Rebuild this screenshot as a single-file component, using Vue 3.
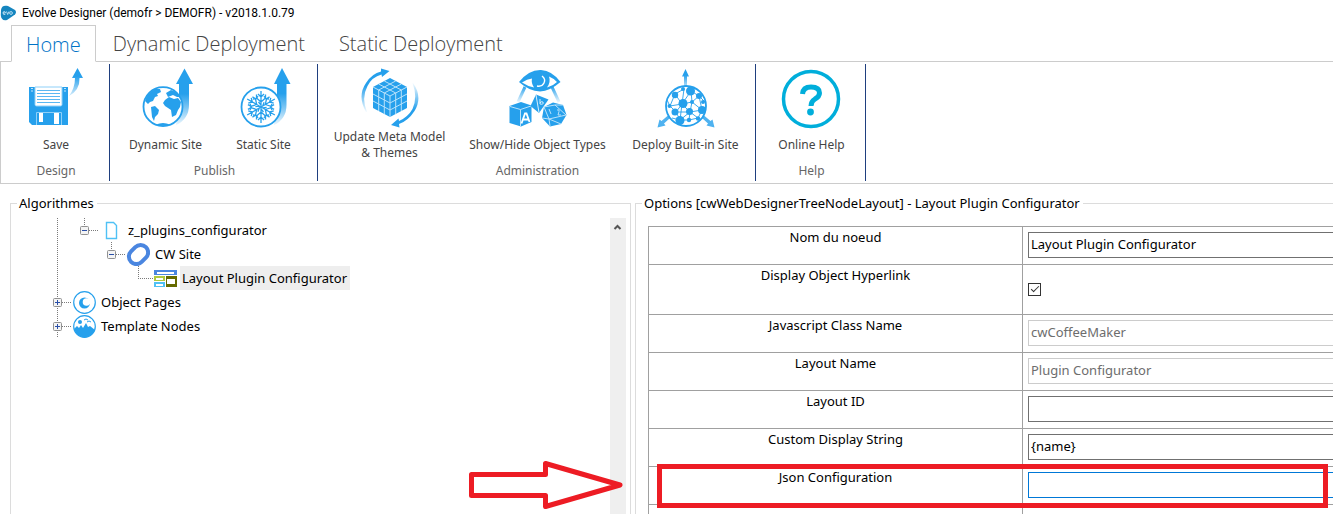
<script setup>
import { reactive } from 'vue'

const tabs = ['Home', 'Dynamic Deployment', 'Static Deployment']

const groups = [
  { name: 'Design', size: 'narrow', items: [{ icon: 'save', label: 'Save', box: '26 64 60 65' }] },
  {
    name: 'Publish',
    size: 'medium',
    items: [
      { icon: 'globe', label: 'Dynamic Site', box: '136 64 60 65' },
      { icon: 'snow', label: 'Static Site', box: '234 64 60 65' },
    ],
  },
  {
    name: 'Administration',
    size: 'wide',
    items: [
      { icon: 'cube', label: 'Update Meta Model & Themes', box: '360 64 60 65' },
      { icon: 'eye', label: 'Show/Hide Object Types', box: '508 64 60 65' },
      { icon: 'network', label: 'Deploy Built-in Site', box: '656 64 60 65' },
    ],
  },
  { name: 'Help', size: 'narrow', items: [{ icon: 'help', label: 'Online Help', box: '782 64 60 65' }] },
]

const tree = [
  { label: 'z_plugins_configurator', icon: 'page', width: 54, lines: ['M12.5 0V24', 'M39.5 0V8', 'M44 12.5H54'], box: 39, open: true },
  { label: 'CW Site', icon: 'ring', width: 81, lines: ['M12.5 0V24', 'M66.5 0V8', 'M71 12.5H81'], box: 66, open: true },
  { label: 'Layout Plugin Configurator', icon: 'layout', width: 108, lines: ['M12.5 0V24', 'M93.5 0V12', 'M93 12.5H108'], selected: true },
  { label: 'Object Pages', icon: 'moon', width: 27, lines: ['M12.5 0V24', 'M17 12.5H27'], box: 12 },
  { label: 'Template Nodes', icon: 'scene', width: 27, lines: ['M12.5 0V24', 'M17 12.5H27'], box: 12 },
]

const fields = reactive([
  { id: 'node', label: 'Nom du noeud', value: 'Layout Plugin Configurator' },
  { id: 'link', label: 'Display Object Hyperlink', check: true, value: true },
  { id: 'class', label: 'Javascript Class Name', value: 'cwCoffeeMaker', disabled: true },
  { id: 'layout', label: 'Layout Name', value: 'Plugin Configurator', disabled: true },
  { id: 'lid', label: 'Layout ID', value: '' },
  { id: 'display', label: 'Custom Display String', value: '{name}' },
  { id: 'json', label: 'Json Configuration', value: '', active: true },
])

const nodes = [
  [683, 103.5, 4.5], [690.5, 91, 4.5], [675, 95, 3.2], [699, 96, 3], [702, 110, 4], [689.5, 111.5, 3.5],
  [675, 112, 3.5], [680, 120.5, 4.5], [692, 102, 2], [689, 120, 2.2], [669.5, 106, 2], [698, 118.5, 2.2], [683, 89, 2], [703, 102, 2],
]
const snowArms = [0, 60, 120, 180, 240, 300]
</script>

<template>
  <div class="app">
    <header class="titlebar">
      <svg width="17" height="16" viewBox="0 0 17 16" aria-hidden="true">
        <path d="M1 5C1.500 1 4 0 8 1L15 5Q17 7 15 9.500L7 15C3 16 1 14 .8 10Z" fill="#1585bf" />
        <path d="M3 8h2.500M3 8q0-1.500 1.200-1.500t1.300 1.500M3 8q0 2 2.300 1.500M6.500 6.500l1.200 3 1.300-3" fill="none" stroke="#d9effa" stroke-width=".8" />
        <circle cx="11" cy="8" r="1.400" fill="none" stroke="#d9effa" stroke-width=".8" />
      </svg>
      <span>Evolve Designer (demofr &gt; DEMOFR) - v2018.1.0.79</span>
    </header>

    <nav class="tabs">
      <button v-for="(tab, i) in tabs" :key="tab" type="button" class="tab" :class="{ current: i === 0 }">{{ tab }}</button>
    </nav>

    <section class="ribbon">
      <div v-for="g in groups" :key="g.name" class="group" :class="g.size">
        <div class="items">
          <button v-for="item in g.items" :key="item.icon" type="button" class="tool">
            <svg width="60" height="65" :viewBox="item.box" aria-hidden="true">
              <g v-if="item.icon === 'save'">
                <linearGradient id="sg" x1="0" y1="0" x2="0" y2="1"><stop offset=".3" stop-color="#26a0ec" /><stop offset="1" stop-color="#26a0ec" stop-opacity=".2" /></linearGradient>
                <path d="M29 87H68V125H32L29 122Z" fill="#26a0ec" />
                <path d="M35 87H62V104.500Q62 106 60.500 106H36.500Q35 106 35 104.500Z" fill="#fff" stroke="#8fd0f8" />
                <path d="M37 90.500H60M37 93.500H60M37 96.500H60M37 99.500H60M37 102.500H60" stroke="#5bb8f2" />
                <path d="M31 88.500h2M31 91h2M64 88.500h2M64 91h2" stroke="#bfe4fb" />
                <path d="M36.500 125V112.500H61.500V125" fill="none" stroke="#8fd0f8" />
                <path d="M39 113h4v9h-4ZM54 113h5v11h-5Z" fill="#fff" />
                <path d="M77.500 68L83 78H79.500Q80 90 69 96Q75 88 75 78H72Z" fill="url(#sg)" />
              </g>
              <g v-else-if="item.icon === 'globe'">
                <linearGradient id="gg" x1="0" y1="0" x2="0" y2="1"><stop offset=".45" stop-color="#26a0ec" /><stop offset="1" stop-color="#26a0ec" stop-opacity=".1" /></linearGradient>
                <path d="M184.500 68.500L193 84H189V105Q189 119 176 125L179 100V84H176Z" fill="url(#gg)" />
                <circle cx="163" cy="106.700" r="19.500" fill="#fff" stroke="#26a0ec" stroke-width="1.800" />
                <path d="M145 101Q147 93 155 89L160 89 161 92 157 94 158 96 155 97 153 101 150 102 148 104Z" fill="#26a0ec" />
                <path d="M151 107L155 106 159 110 158 114 155 117 154 121 152 117Z" fill="#26a0ec" />
                <path d="M165 100L169 97 174 99 178 98 181 102 180 107 178 110 176 115 172 117 171 110 165 106 163 103Z" fill="#26a0ec" />
                <path d="M166 93L171 90 176 92 180 97 177 97 173 95 168 97Z" fill="#26a0ec" />
                <path d="M156 124.500Q163 121.500 170 124.500L163 126Z" fill="#26a0ec" />
              </g>
              <g v-else-if="item.icon === 'snow'">
                <linearGradient id="wg" x1="0" y1="0" x2="0" y2="1"><stop offset=".45" stop-color="#26a0ec" /><stop offset="1" stop-color="#26a0ec" stop-opacity=".1" /></linearGradient>
                <path d="M282 68L290.500 84H286.500V105Q286.500 119 274 125L277 100V84H274Z" fill="url(#wg)" />
                <circle cx="261" cy="107" r="19.500" fill="#fff" stroke="#26a0ec" stroke-width="1.800" />
                <g v-for="a in snowArms" :key="a" :transform="`rotate(${a} 261 107)`" fill="none" stroke="#26a0ec" stroke-width="1.300">
                  <path d="M261 107V91M261 102L256.500 98V94.500M261 102L265.500 98V94.500M261 97L258 94M261 97L264 94M261 105l-2.500-3M253 99l3.500-.5M269 99l-3.500-.5" />
                </g>
              </g>
              <g v-else-if="item.icon === 'cube'">
                <linearGradient id="ca" x1="0" y1="0" x2="0" y2="1"><stop offset=".4" stop-color="#26a0ec" /><stop offset="1" stop-color="#26a0ec" stop-opacity=".05" /></linearGradient>
                <linearGradient id="cb" x1="0" y1="0" x2="0" y2="1"><stop offset="0" stop-color="#26a0ec" stop-opacity=".05" /><stop offset=".6" stop-color="#26a0ec" /></linearGradient>
                <path d="M390 78L407 87V108L390 117L373 108V87Z" fill="#26a0ec" />
                <path d="M373 87L390 96L407 87M390 96V117M378.700 84L395.700 93V114M384.300 81L401.300 90V111M401.300 84L384.300 93V114M395.700 81L378.700 90V111M373 94L390 103L407 94M373 101L390 110L407 101" fill="none" stroke="#b9e2fb" stroke-width="1" />
                <path d="M366 112Q357 96 366 83Q372 73.500 381 71.500L381 68.500 389.500 71 382 77 381.500 74.500Q372 77 367.500 86Q361 98 367 112Z" fill="url(#ca)" />
                <path d="M413 83Q423 97 414.500 111Q408 121 399 124L399.500 127.500 391 125 398.500 118.500 399 121Q408 117 412.500 109Q418 97 412.500 83Z" fill="url(#cb)" />
              </g>
              <g v-else-if="item.icon === 'eye'">
                <linearGradient id="eg" gradientUnits="userSpaceOnUse" x1="0" y1="86" x2="0" y2="102"><stop offset="0" stop-color="#26a0ec" /><stop offset="1" stop-color="#26a0ec" stop-opacity=".1" /></linearGradient>
                <path d="M525 87L518 102M552 87L559 102" stroke="url(#eg)" stroke-width="3" />
                <path d="M519 82Q529 69.500 541 70Q552 70.500 560.500 82Q550 91 540 91.500Q529 91 519 82Z" fill="#26a0ec" />
                <path d="M522 82.500Q527 79 532 78.500Q531 83 534 87.500Q528 86.500 522 82.500ZM549 76.500Q554 78.500 557 82Q553 86 547 87.500Q551 82 549 76.500Z" fill="#fff" />
                <path d="M542 76Q546 79 544 83Q542 87 537 86" fill="none" stroke="#fff" stroke-width="1.400" />
                <path d="M509.500 106L521 102L531.500 105.500V122L521 126.500L509.500 123Z" fill="#26a0ec" />
                <path d="M510 106.500L520.500 109.500L531 106M520.500 109.500V126" fill="none" stroke="#b9e2fb" />
                <path d="M521.500 123.500L525 113.500H526.500L529.500 122M523 119.500H528" fill="none" stroke="#fff" stroke-width="1.800" />
                <path d="M536 94.500L548.500 99.500L539 113L530.500 106Z" fill="#26a0ec" />
                <path d="M536 95L539 112.500M540 99V104q4 1 3-2q-2-1-3 1" fill="none" stroke="#d6effd" />
                <path d="M544 107L553 102.500L563 105L566.500 115L561 124L550 126.500L542 118Z" fill="#26a0ec" />
                <path d="M544 107L549 119L561 124M549 119L542 118M549 119L550 126M549 119L566 115M555 105L563 105M555 105L544 107M555 105L566 115M549 109l2 5M557 110q3-1 2 1.500l-1 3.500h3" fill="none" stroke="#c8e8fc" stroke-width=".9" />
              </g>
              <g v-else-if="item.icon === 'network'">
                <linearGradient id="ng" gradientUnits="userSpaceOnUse" x1="0" y1="70" x2="0" y2="87"><stop offset=".3" stop-color="#26a0ec" /><stop offset="1" stop-color="#26a0ec" stop-opacity=".3" /></linearGradient>
                <path d="M685.500 69L689 76.500H687V87H684V76.500H682Z" fill="url(#ng)" />
                <path d="M657.500 127.500L659.500 119.500 661.500 121 668 115.500 670 118 664 123.500 665.500 125.500ZM714.500 127.500L712.500 119.500 710.500 121 704 115.500 702 118 708 123.500 706.500 125.500Z" fill="#4fb2f0" />
                <circle cx="686" cy="106" r="20" fill="#fff" stroke="#26a0ec" stroke-width="1.800" />
                <path d="M682 104L691 91 699 96 702 110 690 112 682 104 675 94 684 89M691 91L692 102 702 110M692 102L682 104 670 106 675 94M670 106L676 112 682 104 680 120 676 112M680 120L690 112 698 118 702 110M680 120L689 120 698 118M690 112L692 102 699 96M689 120L690 112M676 112L690 112M684 89L682 104M699 96L705 102M670 106L667 100M680 120L672 118" fill="none" stroke="#26a0ec" stroke-width=".9" />
                <circle v-for="(n, i) in nodes" :key="i" :cx="n[0]" :cy="n[1]" :r="n[2]" fill="#26a0ec" />
              </g>
              <g v-else>
                <circle cx="812" cy="99" r="27.500" fill="none" stroke="#00aedb" stroke-width="3.500" />
                <path d="M803.500 94Q804 87 812 87Q820.500 87 820.500 93Q820.500 96.500 816 99Q812 101.500 812 106" fill="none" stroke="#00aedb" stroke-width="5" />
                <circle cx="811.500" cy="112" r="3.400" fill="#00aedb" />
              </g>
            </svg>
            <span class="caption"><span>{{ item.label }}</span></span>
          </button>
        </div>
        <div class="group-name">{{ g.name }}</div>
      </div>
    </section>

    <main class="panels">
      <fieldset class="panel">
        <legend>Algorithmes</legend>
        <div class="tree-area">
          <ul class="tree">
            <li v-for="row in tree" :key="row.label" class="row">
              <svg :width="row.width" height="24" aria-hidden="true">
                <path v-for="d in row.lines" :key="d" :d="d" stroke="#7a7a7a" stroke-dasharray="1 1" />
                <g v-if="row.box">
                  <rect :x="row.box - 3.5" y="8.500" width="8" height="8" rx="1" fill="#f4f4f4" stroke="#919191" />
                  <path :d="`M${row.box - 2} 12.500h5`" stroke="#2a4fa8" />
                  <path v-if="!row.open" :d="`M${row.box + 0.5} 10v5`" stroke="#2a4fa8" />
                </g>
              </svg>
              <svg width="24" height="24" viewBox="0 0 24 24" aria-hidden="true">
                <path v-if="row.icon === 'page'" d="M7.500 4.500H14.500L17.500 7.500V20.500H7.500Z" fill="#fff" stroke="#4fc1f5" stroke-width="1.400" />
                <rect v-else-if="row.icon === 'ring'" x="2" y="5" width="21" height="15" rx="7.500" transform="rotate(-45 12.500 12.500)" fill="none" stroke="#4a86e0" stroke-width="4" />
                <g v-else-if="row.icon === 'layout'">
                  <path d="M1 4H24V9H1Z" fill="#4a86e0" /><path d="M4 6H21V8H4Z" fill="#fff" />
                  <path d="M1 10H12V15H1Z" fill="#b0c940" /><path d="M3 12H10V14H3Z" fill="#fff" />
                  <path d="M1 16H12V21H1Z" fill="#4fc1f5" /><path d="M3 18H10V20H3Z" fill="#fff" />
                  <path d="M13 10H24V21H13Z" fill="#666b00" /><path d="M14 13H22V18H14Z" fill="#fff" />
                </g>
                <g v-else-if="row.icon === 'moon'">
                  <circle cx="12.500" cy="12.500" r="10.800" fill="#fff" stroke="#26a0ec" stroke-width="1.200" />
                  <circle cx="12.500" cy="13" r="5.500" fill="#26a0ec" /><circle cx="14.500" cy="12" r="3.800" fill="#fff" />
                </g>
                <g v-else>
                  <circle cx="12.500" cy="12.500" r="10.800" fill="#fff" stroke="#26a0ec" stroke-width="1.200" />
                  <path d="M2 15L5 12 7 14 9 11 11 14 14 9 16 13 18 12 23 16Q20 23 12.500 23.500Q5 23 2 15Z" fill="#26a0ec" />
                  <circle cx="8" cy="8" r="2" fill="#26a0ec" />
                  <path d="M12 6l2-1 2 1M15 8l2-1 2 1" fill="none" stroke="#26a0ec" />
                </g>
              </svg>
              <span class="label" :class="{ selected: row.selected }">{{ row.label }}</span>
            </li>
          </ul>
          <div class="scrollbar">
            <svg width="16" height="18" aria-hidden="true"><path d="M4.500 11L7.500 8L10.500 11" fill="none" stroke="#555" stroke-width="2" /></svg>
          </div>
        </div>
      </fieldset>

      <fieldset class="panel options">
        <legend>Options [cwWebDesignerTreeNodeLayout] - Layout Plugin Configurator</legend>
        <table>
          <tbody>
            <tr v-for="f in fields" :key="f.id">
              <th scope="row"><label :for="f.id">{{ f.label }}</label></th>
              <td :class="{ 'check-cell': f.check }">
                <input v-if="f.check" :id="f.id" v-model="f.value" type="checkbox" />
                <input v-else :id="f.id" v-model="f.value" type="text" :disabled="f.disabled" :class="{ active: f.active }" />
              </td>
            </tr>
            <tr class="blank"><td></td><td></td></tr>
          </tbody>
        </table>
      </fieldset>
    </main>

    <svg class="arrow" width="156" height="50" viewBox="468 460 156 50" aria-hidden="true">
      <path d="M471.500 474.500H545.500V463.500L620 485L545.500 506.500V495.500H471.500Z" fill="none" stroke="#ed1c24" stroke-width="5" stroke-linejoin="round" />
    </svg>
    <div class="highlight"></div>
  </div>
</template>

<style>
body { margin: 0; background: #fff; }
</style>

<style scoped>
.app {
  position: relative;
  display: flex;
  flex-direction: column;
  height: calc(100vh - 2px);
  overflow: hidden;
  background: #fff;
  color: #000;
  font: 13px/18px "Noto Sans", "Open Sans", sans-serif;
}
button { margin: 0; padding: 0; border: 0; background: none; font: inherit; color: inherit; }
svg { display: block; flex: none; }
.titlebar {
  display: flex;
  align-items: center;
  gap: 5px;
  height: 25px;
  flex: none;
  font: 12px/18px Roboto, sans-serif;
}
.tabs { display: flex; flex: none; height: 37px; padding-left: 11px; border-bottom: 1px solid #ccc; box-sizing: border-box; }
.tab { padding: 0 17px; font: 300 20px/37px "Open Sans", sans-serif; color: #444; white-space: nowrap; }
.tab.current {
  height: 37px;
  padding: 0 14px;
  border: 1px solid #ccc;
  border-bottom-color: #fff;
  background: #fff;
  color: #0072c6;
  box-sizing: border-box;
}
.ribbon { display: flex; flex: none; padding: 2px 0; border-left: 1px solid #ccc; border-bottom: 1px solid #ccc; }
.group { display: flex; flex-direction: column; height: 117px; padding-left: 2px; border-right: 1px solid #1f3f7f; box-sizing: border-box; }
.items { display: flex; justify-content: center; }
.tool { flex: none; display: flex; flex-direction: column; align-items: center; color: #444; font-size: 12px; line-height: 16px; }
.caption { display: flex; align-items: center; height: 32px; }
.group-name { margin-top: 2px; text-align: center; color: #666; font-size: 12px; line-height: 16px; }
.narrow { width: 109px; }
.medium { width: 208px; }
.medium .tool { width: 98px; }
.wide { width: 438px; }
.wide .tool { width: 148px; }
.wide .caption { padding: 0 4px; }
.wide .tool:first-child .caption { padding: 0 18px; }
.narrow:last-child { width: 110px; }
.panels {
  flex: 1;
  min-height: 0;
  display: grid;
  grid-template-columns: 621fr 704fr;
  gap: 4px;
  margin-right: -6px;
  padding: 10px 0 0 10px;
}
.panel { min-width: 0; margin: 0; padding: 6px 4px 0 34px; border: 1px solid #dcdcdc; border-bottom: 0; }
.panel legend { margin-left: -28px; padding: 0 3px 0 2px; line-height: 18px; }
.tree-area { display: flex; justify-content: space-between; height: 100%; }
.tree { margin: 0; padding: 0; list-style: none; }
.row { display: flex; align-items: center; height: 24px; }
.label { margin-left: 3px; padding: 0 3px 0 2px; line-height: 24px; }
.selected { background: #eee; }
.scrollbar { width: 16px; background: #efefef; }
.options { padding: 14px 0 0 12px; }
.panel.options legend { margin-left: -6px; }
table { width: 100%; border-collapse: collapse; table-layout: fixed; }
th { width: 374px; padding: 1px 0 0; border: 1px solid #a0a0a0; font-weight: 400; text-align: center; vertical-align: top; box-sizing: border-box; }
td { padding: 5px 0 6px 5px; border: 1px solid #a0a0a0; }
.blank td { height: 26px; }
input[type="text"] {
  display: block;
  width: 100%;
  height: 26px;
  margin: 0;
  padding: 0 2px 2px;
  border: 1px solid #707070;
  border-radius: 0;
  background: #fff;
  color: #000;
  font: inherit;
  box-sizing: border-box;
}
input[type="text"]:disabled { border-color: #ccc; color: #6d6d6d; }
input[type="text"].active { border-color: #0078d7; }
.check-cell { padding: 18px 0 18px 5px; }
input[type="checkbox"] {
  appearance: none;
  display: grid;
  place-items: center;
  width: 13px;
  height: 13px;
  margin: 0;
  border: 1px solid #333;
  background: #fff;
}
input[type="checkbox"]:checked::before {
  content: "";
  width: 8px;
  height: 4px;
  margin-top: -3px;
  border: solid #333;
  border-width: 0 0 1px 1px;
  transform: rotate(-45deg);
  box-sizing: border-box;
}
.arrow { position: absolute; left: 468px; top: 460px; }
.highlight { position: absolute; left: 657px; right: 5px; top: 464px; height: 44px; border: 5px solid #ed1c24; box-sizing: border-box; }
</style>
